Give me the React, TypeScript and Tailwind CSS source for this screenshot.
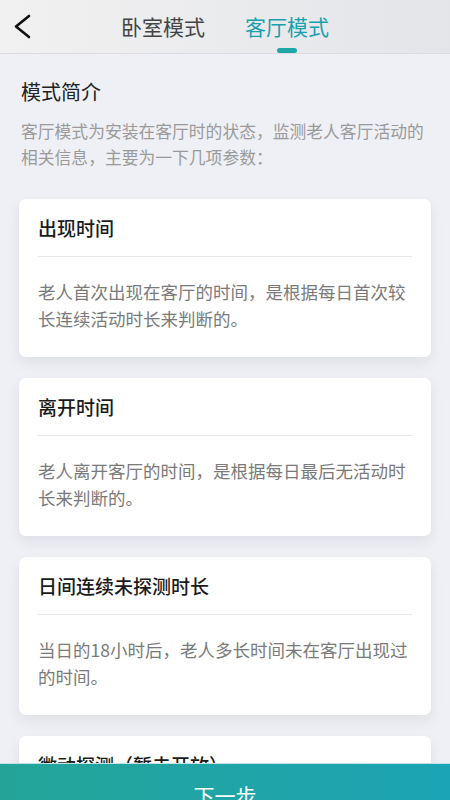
// ── Mode parameter cards ──
const params = [
  {
    title: "出现时间",
    desc: "老人首次出现在客厅的时间，是根据每日首次较长连续活动时长来判断的。",
  },
  {
    title: "离开时间",
    desc: "老人离开客厅的时间，是根据每日最后无活动时长来判断的。",
  },
  {
    title: "日间连续未探测时长",
    desc: "当日的18小时后，老人多长时间未在客厅出现过的时间。",
  },
  {
    title: "微动探测（暂未开放）",
    desc: "",
  },
];

const ParamCard = ({ title, desc }: { title: string; desc: string }) => (
  <div className="bg-white rounded-[7px] shadow-[0_6px_14px_rgba(20,30,60,0.07)] pt-[15px] pb-[25px]">
    <h3 className="px-[19px] text-[19px] leading-[28px] font-medium text-[#1a1a1a]">{title}</h3>
    <div className="mx-[19px] mt-[14px] h-px bg-[#e8e8ec]" />
    <p className="px-[19px] mt-[21px] text-[17.5px] leading-[27px] text-[#7a7a7a]">{desc}</p>
  </div>
);

export default function App() {
  return (
    <div
      className="relative w-[450px] h-[800px] overflow-hidden bg-[#eff0f5]"
      style={{ fontFamily: '"Noto Sans CJK SC", "Noto Sans", sans-serif' }}
    >
      {/* ── Header ── */}
      <header className="relative h-[54px] flex items-center justify-center bg-gradient-to-r from-[#f1f1f1] to-[#e4e5e9] border-b border-[#dcdce0]">
        <button className="absolute left-[12px] top-[12px] text-[#111]" aria-label="Back">
          <svg width="22" height="30" viewBox="0 0 22 30" fill="none">
            <polyline
              points="17,4 4,14.5 17,25"
              stroke="currentColor"
              strokeWidth="2.6"
              strokeLinecap="round"
              strokeLinejoin="round"
            />
          </svg>
        </button>
        <div className="flex items-center gap-10 pb-px">
          <span className="text-[21px] leading-[28px] text-[#444]">卧室模式</span>
          <div className="relative">
            <span className="text-[21px] leading-[28px] text-[#1a9fac]">客厅模式</span>
            <div className="absolute left-1/2 -translate-x-1/2 top-[36px] w-5 h-[5px] rounded-full bg-[#1fa7a8]" />
          </div>
        </div>
      </header>

      {/* ── Intro ── */}
      <section className="px-[21px] pt-[24px]">
        <h2 className="text-[20px] leading-[28px] text-[#222]">模式简介</h2>
        <p className="mt-[12px] text-[16.8px] leading-[26px] text-[#9a9a9a]">
          客厅模式为安装在客厅时的状态，监测老人客厅活动的相关信息，主要为一下几项参数：
        </p>
      </section>

      {/* ── Cards ── */}
      <section className="px-[19px] pt-[29px] flex flex-col gap-[21px]">
        {params.map((p) => (
          <ParamCard key={p.title} title={p.title} desc={p.desc} />
        ))}
      </section>

      {/* ── Next button ── */}
      <button className="absolute left-0 right-0 top-[763px] h-[64px] flex items-center justify-center bg-gradient-to-r from-[#24a498] to-[#1ba4b4] text-white text-[21px] border-t border-[#bfe3e6]">
        下一步
      </button>
    </div>
  );
}
